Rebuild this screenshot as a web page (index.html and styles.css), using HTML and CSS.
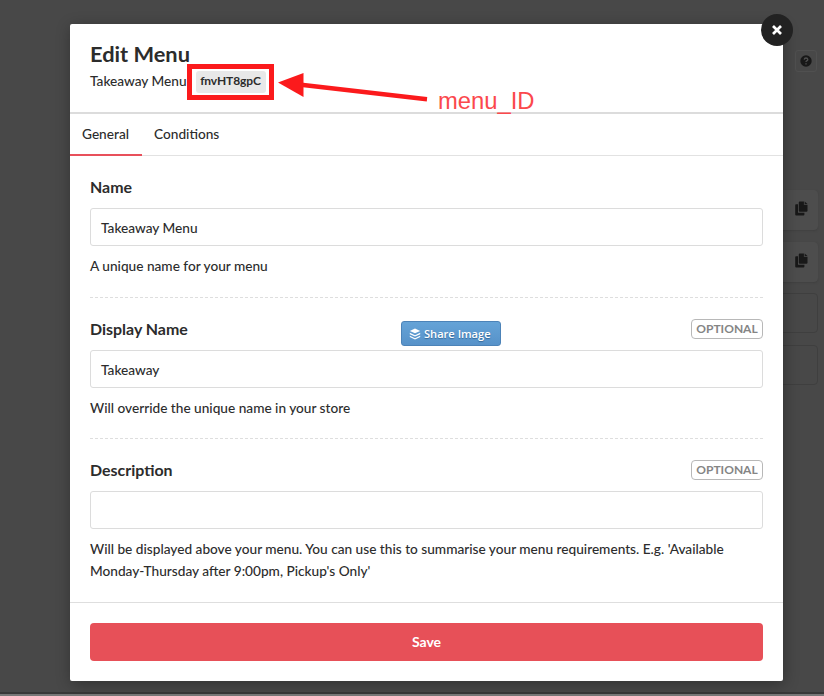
FILE: index.html
```html
<!DOCTYPE html>
<html lang="en">
<head>
<meta charset="utf-8">
<title>Edit Menu</title>
<link rel="stylesheet" href="styles.css">
</head>
<body>
<svg class="defs" width="0" height="0" aria-hidden="true">
  <symbol id="copy" viewBox="0 0 13 15">
    <path d="M1 3.2h2v8.6h6.4v1.7q0 1-1 1H1.2q-1 0-1-1V4.2q0-1 .8-1z"/>
    <path d="M4.8.5h4.1v3.2h3.6v6.1q0 1-1 1H4.8q-1 0-1-1V1.5q0-1 1-1z"/>
    <path d="M9.7.5l2.8 2.5H9.7z"/>
  </symbol>
</svg>
<div class="backdrop">
  <aside class="page">
    <div class="help"><svg width="12" height="12" viewBox="0 0 12 12"><circle cx="6" cy="6" r="5.700" fill="#181818"/><path d="M4.200 4.600Q4.400 3 6 3t1.800 1.400Q7.800 5.300 6.700 5.800 6 6.200 6 7M6 8.200v1.300" fill="none" stroke="#505050" stroke-width="1.300"/></svg></div>
    <div class="row filled first"><svg width="13" height="15"><use href="#copy"/></svg></div>
    <div class="row filled"><svg width="13" height="15"><use href="#copy"/></svg></div>
    <div class="row"></div>
    <div class="row"></div>
  </aside>
  <main class="modal">
    <header class="head">
      <h1>Edit Menu</h1>
      <div class="sub"><span class="subname">Takeaway Menu</span><span class="marker"><code>fnvHT8gpC</code></span></div>
    </header>
    <nav class="tabs"><a class="tab active">General</a><a class="tab">Conditions</a></nav>
    <form class="body">
      <section class="field">
        <div class="label"><label>Name</label></div>
        <div class="input">Takeaway Menu</div>
        <p>A unique name for your menu</p>
      </section>
      <section class="field">
        <div class="label"><label>Display Name</label><span class="optional">OPTIONAL</span></div>
        <div class="input">Takeaway</div>
        <p>Will override the unique name in your store</p>
      </section>
      <section class="field">
        <div class="label"><label>Description</label><span class="optional">OPTIONAL</span></div>
        <div class="input"></div>
        <p>Will be displayed above your menu. You can use this to summarise your menu requirements. E.g. 'Available<br>Monday-Thursday after 9:00pm, Pickup's Only'</p>
      </section>
    </form>
    <footer class="foot"><div class="save">Save</div></footer>
  </main>
  <div class="close"><svg width="12" height="12" viewBox="0 0 12 12"><path d="M2 2l8 8M10 2l-8 8" stroke="#fff" stroke-width="2.700"/></svg></div>
  <svg class="arrow" width="156" height="32" viewBox="0 0 156 32"><path d="M1 12.500L26.500 3v24z" fill="#fb1a1c"/><path d="M24 14.800L150 29.300" stroke="#fb1a1c" stroke-width="4.600"/></svg>
  <span class="note">menu_ID</span>
  <div class="share"><svg width="12" height="12" viewBox="0 0 12 12" fill="#fff"><path d="M6 .5l5.200 2.400L6 5.300.8 2.900z"/><path d="M.8 4.800L6 7.200l5.200-2.400v1.400L6 8.600.8 6.200z"/><path d="M.8 7.800L6 10.200l5.200-2.400v1.300L6 11.500.8 9.100z"/></svg><span>Share Image</span></div>
</div>
</body>
</html>
```
FILE: styles.css
```css
* { box-sizing: border-box; }
body { margin: 0; font-family: Lato, sans-serif; font-size: 13.660px; font-weight: 500; color: #2c2c2c; }
.defs { position: absolute; }
.backdrop { position: relative; width: 824px; height: 696px; overflow: hidden; background: #484848; padding: 24px 41px 0 70px; border-bottom: 2px solid #777; box-shadow: inset 0 -2px #383838; }
.modal { position: relative; width: 713px; height: 657px; background: #fff; border-radius: 2px; display: flex; flex-direction: column; box-shadow: 1px 3px 15px rgba(0,0,0,.32); }
.head { height: 90px; padding: 16px 20px 0; border-bottom: 2px solid #dcdcdc; }
h1 { margin: 0; font-size: 21.800px; line-height: 28px; font-weight: 700; }
.sub { display: flex; align-items: center; height: 25px; white-space: nowrap; }
.subname { width: 97px; }
.marker { flex: none; width: 87px; height: 36px; border: 5px solid #fb1a1c; display: flex; align-items: flex-start; justify-content: center; padding-top: 2px; margin-top: 2px; }
code { font: 700 12px/20px Lato, sans-serif; width: 70px; height: 22px; text-align: center; background: #e8e8e8; border-radius: 3px; letter-spacing: -.1px; }
.tabs { height: 42px; display: flex; border-bottom: 1px solid #e2e2e2; }
.tab { padding: 0 12px; height: 42px; line-height: 40px; }
.active { border-bottom: 2px solid #e8505b; width: 72px; }
.body { padding: 0 20px; flex: 1; }
.field { height: 141.600px; padding-top: 18px; border-bottom: 1px dashed #dedede; }
.field:last-child { border: 0; }
.label { display: flex; justify-content: space-between; align-items: flex-start; height: 24px; line-height: 26px; font-size: 15.950px; font-weight: 700; }
.optional { width: 72px; height: 20px; margin-top: 3px; border: 1px solid #b8b8b8; border-radius: 4px; color: #858585; font-size: 12px; line-height: 18px; text-align: center; }
.input { height: 38px; margin-top: 10px; border: 1px solid #dcdcdc; border-radius: 3px; padding-left: 10px; line-height: 38px; }
p { margin: 9px 0 0; line-height: 22px; white-space: nowrap; }
.foot { height: 79px; padding: 20px; border-top: 1px solid #dedede; }
.save { height: 38px; border-radius: 4px; background: #e75058; color: #fff; text-align: center; font-weight: 700; line-height: 38px; font-size: 14px; }
.page { position: absolute; left: 769px; top: 50px; width: 49px; }
.help { width: 22px; height: 22px; margin-left: 26px; border: 1px solid #505050; border-radius: 3px; display: flex; align-items: center; justify-content: center; }
.row { height: 40px; margin-top: 11.600px; border: 1px solid #3f3f3f; border-radius: 4px; padding: 10px 0 0 25px; }
.first { margin-top: 118px; }
.filled { background: #4d4d4d; border-color: #4d4d4d; box-shadow: 0 1px 2px #404040; fill: #181818; }
.close { position: absolute; left: 761px; top: 14px; width: 32px; height: 32px; border-radius: 50%; background: #222; display: flex; align-items: center; justify-content: center; }
.arrow { position: absolute; left: 277px; top: 70px; }
.note { position: absolute; left: 438px; top: 87px; font: 23.800px/28px "Liberation Sans", sans-serif; color: #fb484c; }
.share { position: absolute; left: 401px; top: 321px; width: 100px; height: 25px; border: 1px solid #4c83b8; border-radius: 3px; background: linear-gradient(#65a3d7, #5792c9); color: #fff; font: 600 11.100px/23px "Open Sans", sans-serif; display: flex; align-items: center; padding-left: 7px; gap: 3px; white-space: nowrap; text-shadow: 0 1px 1px #346899; }
```
